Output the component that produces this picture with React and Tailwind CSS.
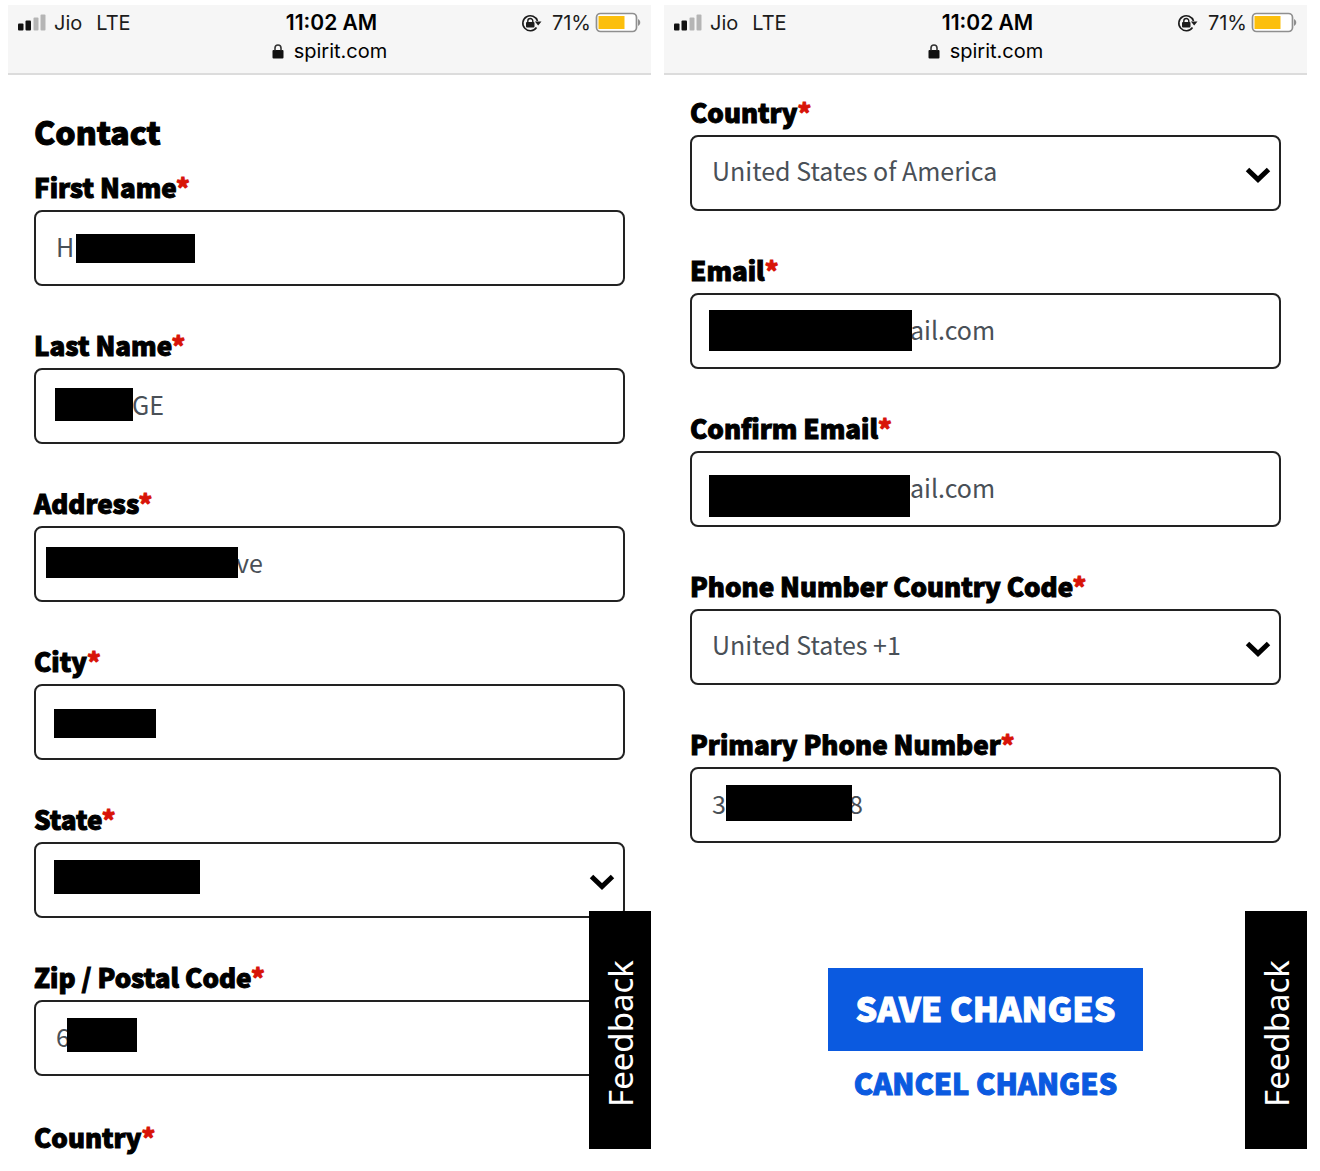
function StatusBar() {
  return (
    <header className="border-b-2 border-[#dcdcdc] bg-[#f6f6f6] font-['Inter',sans-serif] text-[20px] leading-7 text-[#1c1c1c]">
      <div className="grid grid-cols-[1fr_auto_1fr] items-center px-2.5 pt-1">
        <div className="flex items-center">
          <svg className="mr-2 h-[18px] w-7" viewBox="0 0 28 18" aria-hidden="true">
            <rect x="0" y="9.500" width="5.500" height="7" rx="1" fill="#111" />
            <rect x="7.500" y="6.500" width="5.500" height="10" rx="1" fill="#111" />
            <rect x="15.500" y="3.500" width="5" height="13" rx="1" fill="#b5b5b5" />
            <rect x="22.500" y="0.500" width="5" height="16" rx="1" fill="#b5b5b5" />
          </svg>
          <span>Jio</span>
          <span className="ml-3.5">LTE</span>
        </div>
        <div className="pl-1 text-[21px] font-semibold text-black">11:02 AM</div>
        <div className="flex items-center justify-end">
          <svg className="mr-2.5 h-[19px] w-[21px]" viewBox="0 0 21 19" aria-hidden="true">
            <path d="M16.500 7A7.500 7.500 0 1 0 15.500 13.500" fill="none" stroke="#1c1c1c" strokeWidth="1.600" />
            <path d="M13.800 7.500H20.500L17.200 11.500Z" fill="#1c1c1c" />
            <rect x="5" y="8" width="8.500" height="5.500" rx="1" fill="#1c1c1c" />
            <path d="M6.800 8.500V7a2.500 2.500 0 0 1 5 0V8.500" fill="none" stroke="#1c1c1c" strokeWidth="1.400" />
          </svg>
          <span>71%</span>
          <svg className="ml-1 h-[22px] w-[46px]" viewBox="0 0 46 22" aria-hidden="true">
            <rect x="1.500" y="1.500" width="40" height="18" rx="4" fill="#fff" stroke="#8f8f8f" strokeWidth="1.700" />
            <rect x="3.500" y="4" width="26" height="13" fill="#fcbf0c" />
            <path d="M43 7C46 8.500 46 12.500 43 14Z" fill="#8f8f8f" />
          </svg>
        </div>
      </div>
      <div className="flex items-center justify-center gap-2.5 pb-1.5">
        <svg className="h-4 w-3" viewBox="0 0 12 16" aria-hidden="true">
          <rect x="0.500" y="6" width="11" height="8.500" rx="1" fill="#111" />
          <path d="M3 6.500V4a3 3 0 0 1 6 0V6.500" fill="none" stroke="#333" strokeWidth="1.600" />
        </svg>
        <span className="mb-0.5 text-black">spirit.com</span>
      </div>
    </header>
  );
}

const controlClass =
  "block h-19 w-full appearance-none rounded-lg border-2 border-[#222] bg-white pb-1 text-[25px] text-[#495057] outline-none";

const heavyClass = "font-black [-webkit-text-stroke:1px_currentColor]";

const labelClass = `block text-[26px] text-black ${heavyClass}`;

function Required() {
  return <span className="text-[#d81408]">*</span>;
}

function Label({ htmlFor, children }) {
  return (
    <label htmlFor={htmlFor} className={`${labelClass} leading-7`}>
      {children}
      <Required />
    </label>
  );
}

function Field({ id, label, value = "", pad = "pl-5", bar }) {
  return (
    <div>
      <Label htmlFor={id}>{label}</Label>
      <div className="relative mt-[9px]">
        <input id={id} type="text" defaultValue={value} className={`${controlClass} ${pad}`} />
        {bar && <span className={`absolute bg-black ${bar}`} />}
      </div>
    </div>
  );
}

function SelectField({ id, label, value = "", bar }) {
  return (
    <div>
      <Label htmlFor={id}>{label}</Label>
      <div className="relative mt-[9px]">
        <select id={id} className={`${controlClass} pl-5`}>
          <option>{value}</option>
        </select>
        {bar && <span className={`absolute bg-black ${bar}`} />}
        <svg className="pointer-events-none absolute top-8 right-2.5 h-4 w-[26px]" viewBox="0 0 26 16" aria-hidden="true">
          <path d="M2.500 2.500L13 12.500L23.500 2.500" fill="none" stroke="#000" strokeWidth="5" />
        </svg>
      </div>
    </div>
  );
}

function Screen({ children }) {
  return (
    <section className="relative flex flex-col bg-white">
      <StatusBar />
      {children}
      <button
        type="button"
        className="absolute right-0 bottom-0 flex h-[238px] w-[62px] rotate-180 items-center justify-center bg-black pr-0.5 pb-2 font-['Noto_Sans',sans-serif] text-[33px] text-white [writing-mode:vertical-rl]"
      >
        Feedback
      </button>
    </section>
  );
}

export default function App() {
  return (
    <main className="grid grid-cols-2 gap-[13px] bg-white pt-[5px] pr-[13px] pb-5 pl-2 font-['Noto_Sans_CJK_JP',sans-serif]">
      <Screen>
        <form className="px-[26px] pt-8">
          <h1 className={`text-[32px] leading-12 text-black ${heavyClass}`}>Contact</h1>
          <div className="mt-[18px] flex flex-col gap-[45px]">
            <Field id="first-name" label="First Name" value="H" bar="top-6 left-[42px] h-[29px] w-[119px]" />
            <Field id="last-name" label="Last Name" value="GE" pad="pl-24" bar="top-5 left-[21px] h-[33px] w-[78px]" />
            <Field id="address" label="Address" value="ve" pad="pl-[200px]" bar="top-[21px] left-3 h-[31px] w-[192px]" />
            <Field id="city" label="City" bar="top-[25px] left-5 h-[29px] w-[102px]" />
            <SelectField id="state" label="State" bar="top-[18px] left-5 h-[34px] w-[146px]" />
            <Field id="zip" label="Zip / Postal Code" value="6" bar="top-[18px] left-[33px] h-[34px] w-[70px]" />
            <h2 className={`${labelClass} pt-1 leading-6`}>
              Country
              <Required />
            </h2>
          </div>
        </form>
      </Screen>
      <Screen>
        <form className="px-[26px] pt-[23px]">
          <div className="flex flex-col gap-[45px]">
            <SelectField id="country" label="Country" value="United States of America" />
            <Field id="email" label="Email" value="ail.com" pad="pl-[218px]" bar="top-[17px] left-[19px] h-[41px] w-[203px]" />
            <Field id="confirm-email" label="Confirm Email" value="ail.com" pad="pl-[218px]" bar="top-6 left-[19px] h-[42px] w-[201px]" />
            <SelectField id="phone-code" label="Phone Number Country Code" value="United States +1" />
            <Field id="phone" label="Primary Phone Number" value={"3" + "\u00a0".repeat(22) + "8"} bar="top-[18px] left-9 h-[36px] w-[126px]" />
          </div>
          <div className="mt-[125px] flex flex-col items-center">
            <button type="button" className={`h-[83px] bg-[#0b5ae0] px-7 pb-1 text-[34px] text-white ${heavyClass}`}>
              SAVE CHANGES
            </button>
            <button type="button" className={`mt-2 h-12 text-[29px] text-[#0b5ae0] ${heavyClass}`}>
              CANCEL CHANGES
            </button>
          </div>
        </form>
      </Screen>
    </main>
  );
}
